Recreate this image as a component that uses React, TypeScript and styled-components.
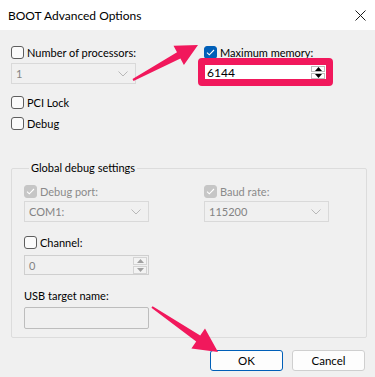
import React from 'react';
import styled, { createGlobalStyle } from 'styled-components';

const GlobalStyle = createGlobalStyle`
  html, body {
    margin: 0;
    padding: 0;
    background: #f0f0f0;
  }
  body {
    font-family: Lato, 'Noto Sans', sans-serif;
    font-size: 11px;
    color: #000;
  }
`;

const PINK = '#f1185c';

function Check({ checked, disabled, label }: { checked?: boolean; disabled?: boolean; label: string }) {
  return (
    <CheckRow $disabled={disabled}>
      <Box $checked={checked} $disabled={disabled}>
        {checked && (
          <svg width="9" height="7" viewBox="0 0 9 7">
            <path d="M1 3.6 L3.3 5.8 L8 1" fill="none" stroke="#fff" strokeWidth="1.1" />
          </svg>
        )}
      </Box>
      <span>{label}</span>
    </CheckRow>
  );
}

function Chevron() {
  return (
    <svg width="10" height="6" viewBox="0 0 10 6">
      <path d="M0.5 0.5 L5 5 L9.5 0.5" fill="none" stroke="#b8b8b8" strokeWidth="1" />
    </svg>
  );
}

function Spinner({ disabled }: { disabled?: boolean }) {
  const c = disabled ? '#a0a0a0' : '#000';
  return (
    <SpinCol $disabled={disabled}>
      <SpinBtn $disabled={disabled}>
        <svg width="7" height="4" viewBox="0 0 7 4">
          <path d="M0 4 L3.5 0 L7 4 Z" fill={c} />
        </svg>
      </SpinBtn>
      <SpinBtn $disabled={disabled}>
        <svg width="7" height="4" viewBox="0 0 7 4">
          <path d="M0 0 L3.5 4 L7 0 Z" fill={c} />
        </svg>
      </SpinBtn>
    </SpinCol>
  );
}

export default function App() {
  return (
    <>
      <GlobalStyle />
      <Window>
        <TitleBar>
          <Title>BOOT Advanced Options</Title>
          <svg width="11" height="11" viewBox="0 0 11 11">
            <path d="M0.5 0.5 L10.5 10.5 M10.5 0.5 L0.5 10.5" stroke="#1a1a1a" strokeWidth="1" />
          </svg>
        </TitleBar>

        <Body>
          <TopGrid>
            <Column>
              <Check label="Number of processors:" />
              <Combo $width={125} $top={4}>
                <span>1</span>
                <Chevron />
              </Combo>
              <Spacer $h={12} />
              <Check label="PCI Lock" />
              <Spacer $h={8} />
              <Check label="Debug" />
            </Column>
            <Column>
              <Check checked label="Maximum memory:" />
              <PinkFrame>
                <MemoryInput>
                  <span>6144</span>
                  <Spinner />
                </MemoryInput>
              </PinkFrame>
            </Column>
          </TopGrid>

          <Group>
            <Legend>Global debug settings</Legend>
            <GroupGrid>
              <Column>
                <Check checked disabled label="Debug port:" />
                <Combo $width={125} $top={3}>
                  <span>COM1:</span>
                  <Chevron />
                </Combo>
              </Column>
              <Column>
                <Check checked disabled label="Baud rate:" />
                <Combo $width={125} $top={3}>
                  <span>115200</span>
                  <Chevron />
                </Combo>
              </Column>
            </GroupGrid>
            <Spacer $h={14} />
            <Check label="Channel:" />
            <SpinBox>
              <span>0</span>
              <Spinner disabled />
            </SpinBox>
            <FieldLabel>USB target name:</FieldLabel>
            <TextBox />
          </Group>

          <ButtonRow>
            <Button $primary>OK</Button>
            <Button>Cancel</Button>
          </ButtonRow>
        </Body>

        <Overlay width="375" height="377" viewBox="0 0 375 377">
          <polygon
            fill={PINK}
            points="132.5,79.1 177,52.3 173.5,45.7 198,45 183.9,65.1 180.4,58.5 133.5,80.9"
          />
          <polygon
            fill={PINK}
            points="152.6,306.2 200.2,335.6 205,328.6 218,352 191.4,348.4 196.2,341.4 151.4,307.8"
          />
        </Overlay>
      </Window>
    </>
  );
}

const Window = styled.div`
  position: relative;
  width: 375px;
  height: 377px;
  background: #f0f0f0;
  display: flex;
  flex-direction: column;
  overflow: hidden;
`;

const TitleBar = styled.div`
  height: 30px;
  background: #fff;
  display: flex;
  align-items: center;
  justify-content: space-between;
  padding: 0 9px 0 8px;
  flex-shrink: 0;
`;

const Title = styled.span`
  font-size: 12px;
  color: #000;
`;

const Body = styled.div`
  flex: 1;
  display: flex;
  flex-direction: column;
  padding: 16px 8px 0 11px;
`;

const TopGrid = styled.div`
  display: grid;
  grid-template-columns: 193px 1fr;
`;

const Column = styled.div`
  display: flex;
  flex-direction: column;
  align-items: flex-start;
`;

const Spacer = styled.div<{ $h: number }>`
  height: ${(p) => p.$h}px;
  flex-shrink: 0;
`;

const CheckRow = styled.label<{ $disabled?: boolean }>`
  display: flex;
  align-items: center;
  gap: 3px;
  height: 13px;
  line-height: 13px;
  white-space: nowrap;
  color: ${(p) => (p.$disabled ? '#8a8a8a' : '#000')};
`;

const Box = styled.span<{ $checked?: boolean; $disabled?: boolean }>`
  box-sizing: border-box;
  width: 13px;
  height: 13px;
  border-radius: 3px;
  display: flex;
  align-items: center;
  justify-content: center;
  border: 1px solid
    ${(p) => (p.$disabled ? '#c6c6c6' : p.$checked ? '#005fb8' : '#5e5e5e')};
  background: ${(p) => (p.$disabled ? '#c6c6c6' : p.$checked ? '#005fb8' : '#fbfbfb')};
`;

const Combo = styled.div<{ $width: number; $top: number }>`
  box-sizing: border-box;
  width: ${(p) => p.$width}px;
  height: 21px;
  margin-top: ${(p) => p.$top}px;
  border: 1px solid #d9d9d9;
  background: #f0f0f0;
  color: #838383;
  display: flex;
  align-items: center;
  justify-content: space-between;
  padding: 0 7px 0 4px;
`;

const PinkFrame = styled.div`
  box-sizing: border-box;
  width: 135px;
  height: 28px;
  margin: -1px 0 0 -6px;
  border: 7px solid ${PINK};
  border-radius: 4px;
  background: ${PINK};
  overflow: hidden;
`;

const MemoryInput = styled.div`
  height: 100%;
  background: #fff;
  display: flex;
  align-items: center;
  justify-content: space-between;
  padding-left: 2px;
  overflow: hidden;
  color: #000;
  font-size: 12px;
`;

const SpinCol = styled.div<{ $disabled?: boolean }>`
  align-self: stretch;
  width: 14px;
  display: flex;
  flex-direction: column;
  gap: 1px;
  padding: 1px 1px 0 0;
  background: ${(p) => (p.$disabled ? '#f0f0f0' : '#fff')};
`;

const SpinBtn = styled.div<{ $disabled?: boolean }>`
  flex: 1;
  display: flex;
  align-items: center;
  justify-content: center;
  background: ${(p) => (p.$disabled ? '#f3f3f3' : '#fff')};
  border: 1px solid ${(p) => (p.$disabled ? '#d4d4d4' : '#bdbdbd')};
`;

const Group = styled.fieldset`
  margin: 31px 0 0 0;
  padding: 10px 0 8px 12px;
  border: 1px solid #dcdcdc;
  border-radius: 2px;
  display: flex;
  flex-direction: column;
  align-items: flex-start;
  min-width: 0;
`;

const Legend = styled.legend`
  padding: 0 2px;
  margin-left: 5px;
  line-height: 14px;
  color: #000;
`;

const GroupGrid = styled.div`
  display: grid;
  grid-template-columns: 180px 1fr;
  width: 100%;
`;

const SpinBox = styled.div`
  box-sizing: border-box;
  width: 125px;
  height: 20px;
  margin-top: 6px;
  border: 1px solid #cfcfcf;
  background: #f0f0f0;
  color: #838383;
  display: flex;
  align-items: stretch;
  justify-content: space-between;
  padding-left: 4px;

  span {
    align-self: center;
  }
`;

const FieldLabel = styled.div`
  margin-top: 14px;
  line-height: 14px;
  color: #000;
`;

const TextBox = styled.div`
  box-sizing: border-box;
  width: 125px;
  height: 22px;
  margin-top: 4px;
  border: 1px solid #bdbdbd;
  border-radius: 2px;
  background: #f0f0f0;
`;

const ButtonRow = styled.div`
  display: flex;
  justify-content: flex-end;
  gap: 9px;
  margin: 12px 2px 0 0;
`;

const Button = styled.button<{ $primary?: boolean }>`
  box-sizing: border-box;
  width: 73px;
  height: 21px;
  padding: 0;
  font-family: inherit;
  font-size: 11.5px;
  color: #000;
  background: #fdfdfd;
  border: 1px solid ${(p) => (p.$primary ? '#005fb8' : '#cfcfcf')};
  border-radius: 3px;
  box-shadow: ${(p) => (p.$primary ? 'inset 0 0 0 1px #fdfdfd' : 'none')};
`;

const Overlay = styled.svg`
  position: absolute;
  left: 0;
  top: 0;
  pointer-events: none;
`;
